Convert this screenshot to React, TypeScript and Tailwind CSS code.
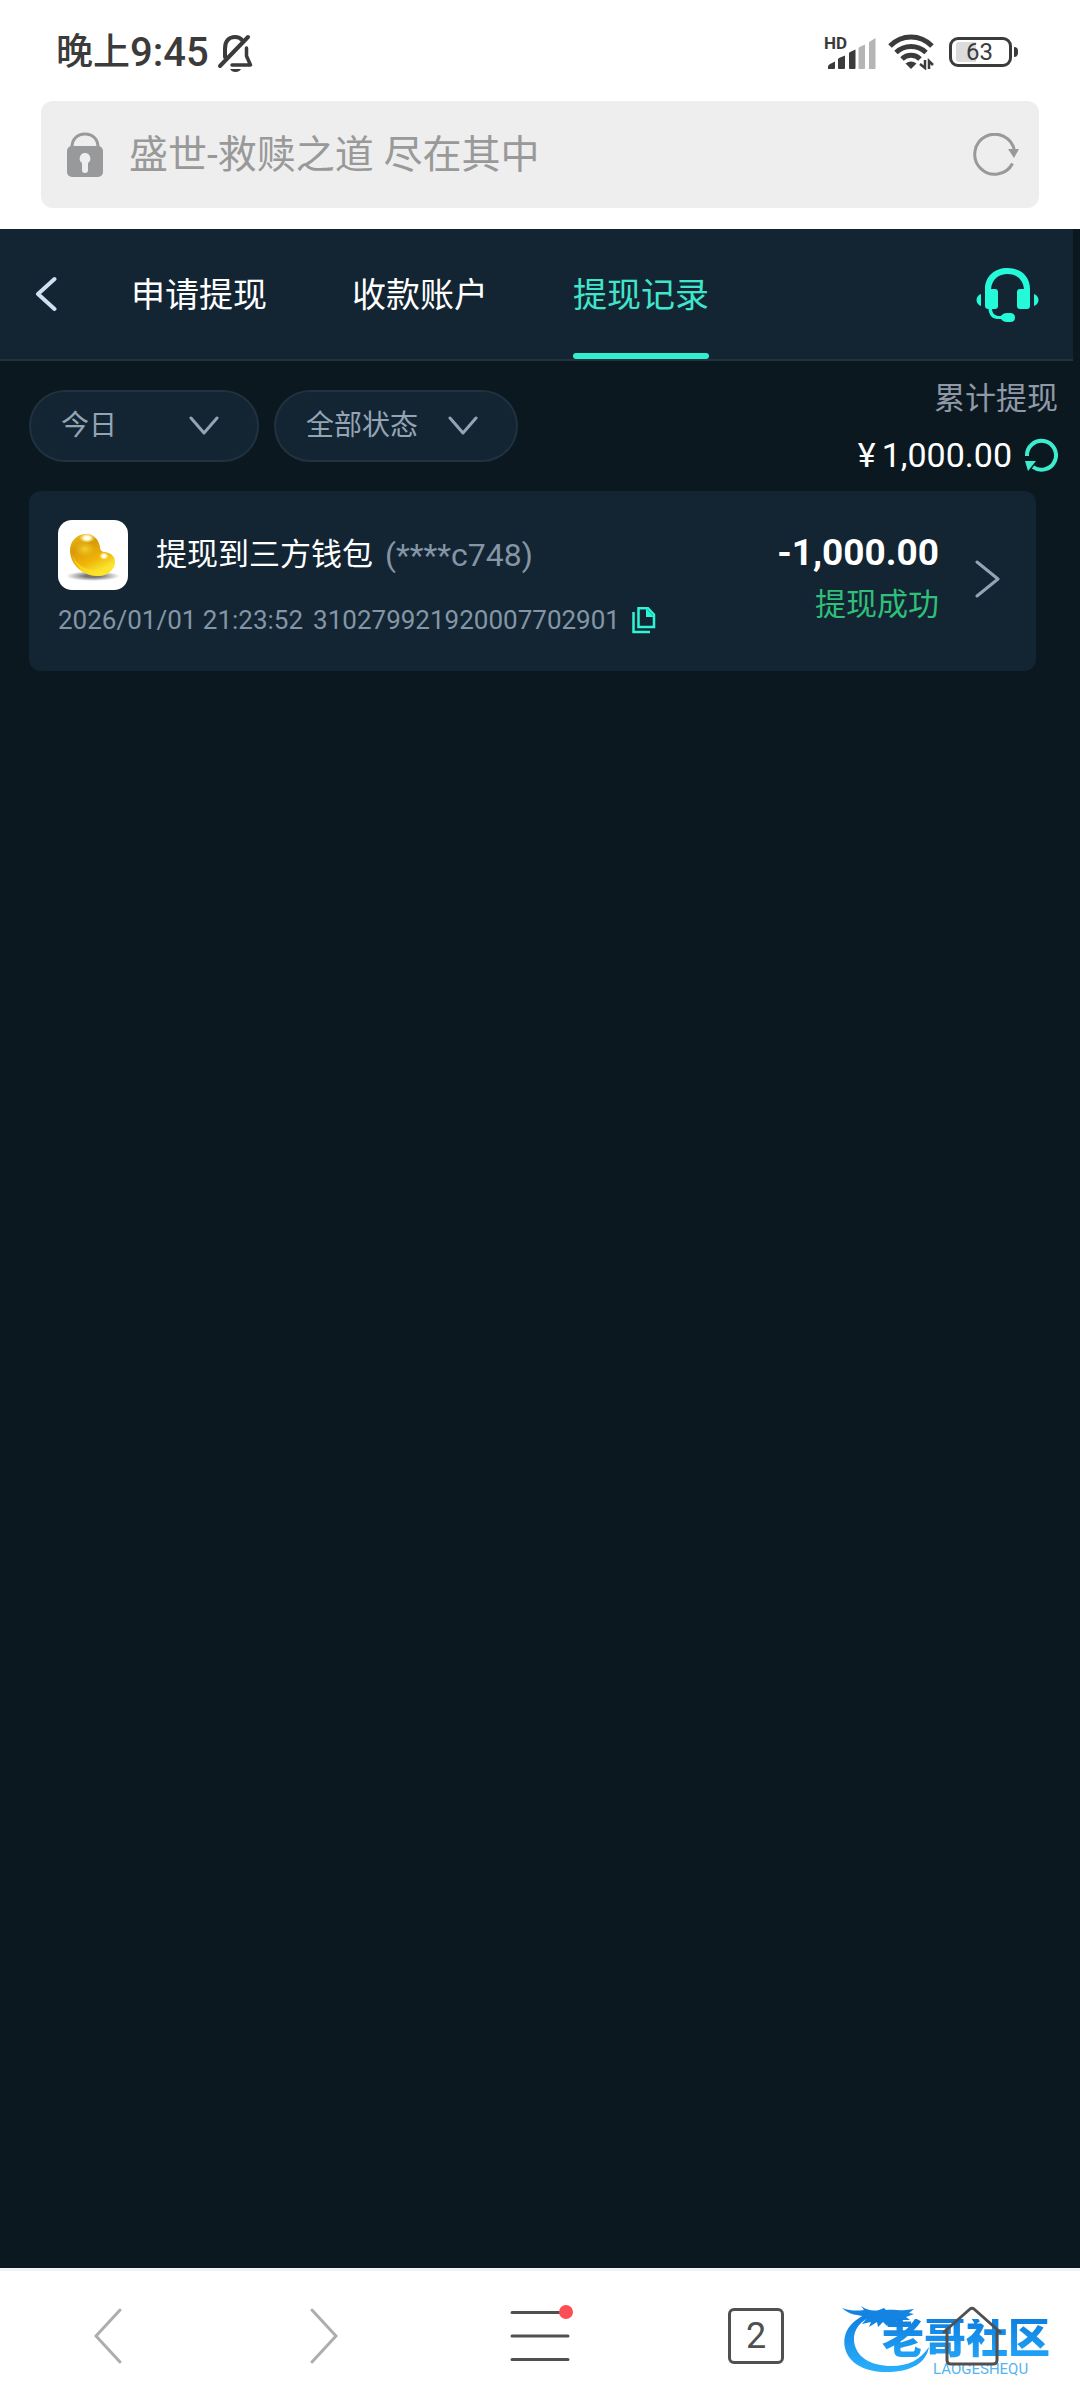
import React from 'react';

const tabs = ['申请提现', '收款账户', '提现记录'];

const filters = [
  { id: 'date', label: '日期', width: 'w-[230px]', options: ['今日', '昨日', '近七日'] },
  { id: 'status', label: '状态', width: 'w-[244px]', options: ['全部状态', '提现成功', '提现失败'] },
];

const StatusBar: React.FC = () => (
  <div className="flex h-[101px] items-center justify-between pl-14 pr-[62px] text-[#3b3b3b]">
    <div className="flex items-center gap-2 pt-1">
      <div className="flex items-center font-medium">
        <span className="text-[37px] leading-[48px]">晚上</span>
        <span className="text-[40px] leading-[48px]">9:45</span>
      </div>
      <svg className="h-10 w-9" viewBox="0 0 36 40" fill="none" stroke="currentColor" strokeWidth="4" strokeLinecap="round" strokeLinejoin="round">
        <path d="M8 24V15.500C8 8 12 4 18 4c3 0 5.500 1 7 3" />
        <path d="M3 33 31 4" />
        <path d="M29.500 15v8l4 9H15" strokeWidth="3.500" />
        <path d="M13 36h11c-1 2-3 3-5.500 3s-4.500-1-5.500-3z" fill="currentColor" stroke="none" />
      </svg>
    </div>
    <div className="flex items-center pt-0.5">
      <svg className="h-10 w-[52px]" viewBox="0 0 52 40" fill="#3b3b3b">
        <text x="0" y="17" fontSize="17" fontWeight="700" fontFamily="Roboto, sans-serif">HD</text>
        <path d="M4 37v-2.500q0-1.500 2-2.500l5-2.500V36q0 1-1 1zM14 37V27.500q0-1 1-1.500l6-2.500V36q0 1-1 1h-5q-1 0-1-1zM25 37V21.500q0-1 1-1.500l5.500-2.500V36q0 1-1 1H26q-1 0-1-1z" />
        <path d="M34.500 37V16.500q0-1 1-1.500l5.500-2.500V36q0 1-1 1zM45 37V11q0-1 1-1.500L51.500 6v30q0 1-1 1z" fill="#b5b5b5" />
      </svg>
      <svg className="ml-3 h-9 w-[46px]" viewBox="0 0 46 36" fill="none" stroke="currentColor" strokeWidth="5">
        <path d="M2 12C14 0 32 0 44 12" />
        <path d="M8 18.500c8.500-8 21.500-8 30 0" />
        <path d="M14 25c5-5 13-5 18 0" />
        <path d="M17.500 29.500q5.500-4 11 0L23 35z" fill="currentColor" stroke="none" />
        <path d="M37 26v8l-5-4M41 35v-8l4 4" strokeWidth="2.500" />
      </svg>
      <div className="ml-[15px] flex h-[30px] w-[63px] items-center rounded-[9px] border-[3px] border-current pl-1">
        <div className="flex h-5 w-5 items-center rounded-l-[3px] bg-[#dcdcdc] pl-2.5 text-2xl">63</div>
      </div>
      <div className="ml-0.5 h-2.5 w-1 rounded-r bg-current" />
    </div>
  </div>
);

const AddressBar: React.FC = () => (
  <div className="px-[41px] pb-[21px]">
    <div className="flex h-[107px] items-center rounded-xl bg-[#eeeeee] pl-[26px] pr-5 text-[#999999]">
      <svg className="h-[45px] w-9 shrink-0" viewBox="0 0 36 45" fill="none">
        <path d="M5 16v-1C5 7 10.500 2 18 2s13 5 13 13v1" stroke="#999" strokeWidth="3" />
        <rect y="14" width="36" height="31" rx="5" fill="#98999b" />
        <path d="M18 21a5.500 5.500 0 0 0-3 10v7a3 3 0 0 0 6 0v-7a5.500 5.500 0 0 0-3-10z" fill="#eee" />
      </svg>
      <input
        aria-label="地址"
        readOnly
        value="盛世-救赎之道 尽在其中"
        className="ml-[26px] min-w-0 flex-1 bg-transparent text-[39px] leading-[48px] outline-none"
      />
      <button aria-label="刷新页面">
        <svg className="h-11 w-[46px]" viewBox="0 0 46 44" fill="none">
          <path d="M39.500 30.500A20 20 0 1 1 41.500 18" stroke="#999" strokeWidth="3" />
          <path d="M35 16h11L41 25z" fill="#999" />
        </svg>
      </button>
    </div>
  </div>
);

const Header: React.FC = () => (
  <header className="mr-[7px] flex h-[132px] items-stretch border-b-2 border-[#223340] bg-[#132533] pr-[33px]">
    <button aria-label="返回" className="w-[131px] pl-[35px]">
      <svg className="h-9 w-[22px]" viewBox="0 0 22 36" fill="none" stroke="#cfe0f0" strokeWidth="4" strokeLinecap="round" strokeLinejoin="round">
        <path d="M19.500 3 3 18l16.500 15" />
      </svg>
    </button>
    <nav className="flex gap-[85px]">
      {tabs.map((tab, i) => (
        <a
          key={tab}
          href="#"
          className={`flex flex-col justify-between text-[34px] leading-[48px] ${i === 2 ? 'text-[#40e6cb]' : 'text-white'}`}
        >
          <span className="pt-[42px]">{tab}</span>
          <span className={`h-1.5 rounded-full ${i === 2 ? 'bg-[#33edcf]' : 'bg-transparent'}`} />
        </a>
      ))}
    </nav>
    <button aria-label="客服" className="ml-auto pt-0.5">
      <svg className="h-14 w-16" viewBox="0 0 64 56" fill="#24fad9">
        <path d="M9 22C9 9 19 1 31.500 1S54 9 54 22v17q0 3-3 3h-7q-3 0-3-3V25q0-3 3-3h4C47 12 40 7 31.500 7S16 12 15 22h4q3 0 3 3v14q0 3-3 3h-3c.5 4 2 6 6 7h3q2-3 6-3h3q5 0 5 4.500T34 55h-3q-4 0-6-3h-3c-6 0-9-4-9.500-10Q9 42 9 39z" />
        <path d="M5 27v12C-1 37 -1 29 5 27zM58 27v12c6-2 6-10 0-12z" />
      </svg>
    </button>
  </header>
);

const Filters: React.FC = () => (
  <div className="flex items-start justify-between pl-[29px] pr-[22px]">
    <div className="flex gap-[15px] pt-[29px]">
      {filters.map((f) => (
        <label
          key={f.id}
          className={`flex h-[72px] items-center rounded-full border-2 border-[#203240] bg-[#132533] pl-[30px] pr-[38px] ${f.width}`}
        >
          <select
            aria-label={f.label}
            className="min-w-0 flex-1 appearance-none bg-transparent text-[28px] leading-10 text-[#93a4b4] outline-none"
          >
            {f.options.map((o) => (
              <option key={o}>{o}</option>
            ))}
          </select>
          <svg className="h-5 w-[30px]" viewBox="0 0 30 20" fill="none" stroke="#93a4b4" strokeWidth="3" strokeLinecap="round" strokeLinejoin="round">
            <path d="m2 2 13 15L28 2" />
          </svg>
        </label>
      ))}
    </div>
    <div className="flex flex-col items-end gap-2 pt-3.5">
      <span className="text-[31px] leading-[48px] text-[#8f99a8]">累计提现</span>
      <div className="flex items-center text-white">
        <span className="flex gap-1.5 text-[34px] leading-[48px]">
          <span>¥</span>
          <span>1,000.00</span>
        </span>
        <button aria-label="刷新金额" className="ml-3">
          <svg className="h-[34px] w-[34px]" viewBox="0 0 34 34" fill="none">
            <path d="M3 18A14.500 14.500 0 1 1 9 29" stroke="#3beccf" strokeWidth="4" />
            <path d="M1 23h11L4 33z" fill="#3beccf" />
          </svg>
        </button>
      </div>
    </div>
  </div>
);

const WalletIcon: React.FC = () => (
  <svg className="h-[70px] w-[70px] shrink-0" viewBox="0 0 70 70">
    <defs>
      <radialGradient id="shade">
        <stop offset="0.300" stopColor="#777" />
        <stop offset="1" stopColor="#fff" />
      </radialGradient>
      <linearGradient id="gold" x1="0" y1="0" x2="0.500" y2="1">
        <stop offset="0" stopColor="#f0c21a" />
        <stop offset="0.350" stopColor="#d79a08" />
        <stop offset="0.700" stopColor="#f0b408" />
        <stop offset="1" stopColor="#f8ec3a" />
      </linearGradient>
      <radialGradient id="glow">
        <stop offset="0" stopColor="#fff" />
        <stop offset="0.400" stopColor="#fffbe0" />
        <stop offset="1" stopColor="#fbe36a" stopOpacity="0" />
      </radialGradient>
      <radialGradient id="core">
        <stop offset="0" stopColor="#f2cf2c" />
        <stop offset="1" stopColor="#f2c21c" stopOpacity="0" />
      </radialGradient>
    </defs>
    <rect width="70" height="70" rx="14" fill="#fff" />
    <ellipse cx="35" cy="56" rx="27" ry="5" fill="url(#shade)" />
    <path d="M12 30c0-9 7-16 16-16 8 0 13 6 14 13 0 3 2 5 5 5 6 1 10 4 10 10 0 8-8 14-17 14C25 56 12 45 12 30z" fill="url(#gold)" />
    <ellipse cx="27" cy="29" rx="11" ry="8" fill="url(#core)" />
    <path d="M14 35c6 12 16 16 28 15 6-1 11-3 15-8-1 8-8 14-17 14-12 0-22-8-26-21z" fill="#ffe11f" opacity=".6" />
    <ellipse cx="29" cy="18" rx="8" ry="5" fill="url(#glow)" />
    <ellipse cx="46" cy="36" rx="5" ry="4" fill="url(#glow)" />
  </svg>
);

const RecordCard: React.FC = () => (
  <article className="ml-[29px] mr-11 mt-3 flex h-[180px] items-center rounded-xl bg-[#132533] pb-1 pl-[29px] pr-9">
    <div className="flex flex-col gap-3">
      <div className="flex items-center">
        <WalletIcon />
        <h2 className="ml-7 text-[31px] leading-[48px] text-white">提现到三方钱包</h2>
        <span className="ml-3 text-[32px] leading-[48px] text-[#8496a6]">(****c748)</span>
      </div>
      <div className="flex items-center text-[26px] leading-9 text-[#8496a6]">
        <time>2026/01/01 21:23:52</time>
        <span className="ml-2.5">310279921920007702901</span>
        <button aria-label="复制单号" className="ml-3">
          <svg className="h-7 w-6" viewBox="0 0 24 28" fill="none" stroke="#2cf5d8" strokeWidth="2.500">
            <path d="M6.500 2.200H16l6 6.500V21H6.500z" />
            <path d="M14 2l8 9h-8z" fill="#2cf5d8" stroke="none" />
            <path d="M1.500 6v20H18" />
          </svg>
        </button>
      </div>
    </div>
    <div className="ml-auto flex flex-col items-end gap-0.5 pb-0.5">
      <span className="text-[37px] leading-[52px] font-bold text-white">-1,000.00</span>
      <span className="text-[31px] leading-[48px] text-[#2fbf78]">提现成功</span>
    </div>
    <button aria-label="查看详情" className="ml-9">
      <svg className="h-[38px] w-[25px]" viewBox="0 0 25 38" fill="none" stroke="#93a4b4" strokeWidth="3" strokeLinecap="round" strokeLinejoin="round">
        <path d="m2 2 21 17L2 36" />
      </svg>
    </button>
  </article>
);

const SiteMark: React.FC = () => (
  <div className="pointer-events-none absolute right-[18px] top-[34px] h-[72px] w-[220px]">
    <svg className="absolute inset-0 h-[72px] w-[92px]" viewBox="0 0 92 72">
      <defs>
        <linearGradient id="dragon" x1="0" y1="0" x2="0" y2="1">
          <stop offset="0" stopColor="#0f7fe0" />
          <stop offset="1" stopColor="#2bb0fb" />
        </linearGradient>
      </defs>
      <path d="M25 9C8 16 0 28 3 43c4 17 23 25 45 24 22-1 36-9 39-25-9 13-21 19-37 19-22 0-36-9-38-25-1-11 6-21 21-26z" fill="url(#dragon)" />
      <path d="M0 3c8 3 15 3 22 2l-3-4c7 5 13 5 18 4l5-2 2 2c8-1 14 1 20 0l8-1-5 4 5 1-8 3 4 3h-9l3 4-8-3 1 4-7-3-3 4-4-4-5 5-1-5-8 5 2-5-9 2 6-7C16 10 7 10 0 3z" fill="#1484e2" />
    </svg>
    <div className="absolute left-[40px] top-[14px] bg-gradient-to-b from-[#0f7fe0] to-[#22a4f8] bg-clip-text text-[42px] leading-10 font-black whitespace-nowrap text-transparent">
      老哥社区
    </div>
    <div className="absolute left-[91px] top-[58px] text-[15px] leading-3 text-[#58b4ee]">LAOGESHEQU</div>
  </div>
);

const BottomNav: React.FC = () => (
  <footer className="relative h-[132px] border-t-[3px] border-[#eff4f8] bg-white">
    <SiteMark />
    <nav className="relative grid h-full grid-cols-5 place-items-center">
      <button aria-label="后退">
        <svg className="h-14 w-7" viewBox="0 0 28 56" fill="none" stroke="#adadad" strokeWidth="3" strokeLinecap="round">
          <path d="M26 2 2 28l24 26" />
        </svg>
      </button>
      <button aria-label="前进">
        <svg className="h-14 w-7" viewBox="0 0 28 56" fill="none" stroke="#adadad" strokeWidth="3" strokeLinecap="round">
          <path d="m2 2 24 26L2 54" />
        </svg>
      </button>
      <button aria-label="菜单">
        <svg className="h-[62px] w-[70px]" viewBox="0 0 70 62" fill="none" stroke="#505050" strokeWidth="3" strokeLinecap="round">
          <path d="M7 7.500h56M7 31h56M7 54.500h56" />
          <circle cx="61" cy="7" r="7" fill="#fc4f55" stroke="none" />
        </svg>
      </button>
      <button
        aria-label="标签页"
        className="flex h-14 w-14 items-center justify-center rounded-md border-[3px] border-[#505050] text-4xl text-[#505050]"
      >
        2
      </button>
      <a href="#" aria-label="主页">
        <svg className="h-[60px] w-[60px]" viewBox="0 0 60 60" fill="none" stroke="#505050" strokeWidth="3" strokeLinecap="round" strokeLinejoin="round">
          <path d="M2 26 28 3q2-1.500 4 0l26 23M5 24v30q0 4 4 4h42q4 0 4-4V24" />
        </svg>
      </a>
    </nav>
  </footer>
);

const App: React.FC = () => {
  return (
    <div className="flex min-h-screen flex-col bg-white font-['Roboto','Noto_Sans_CJK_SC',sans-serif]">
      <StatusBar />
      <AddressBar />
      <main className="flex-1 bg-[#0c1820]">
        <Header />
        <Filters />
        <RecordCard />
      </main>
      <BottomNav />
    </div>
  );
};

export default App;
